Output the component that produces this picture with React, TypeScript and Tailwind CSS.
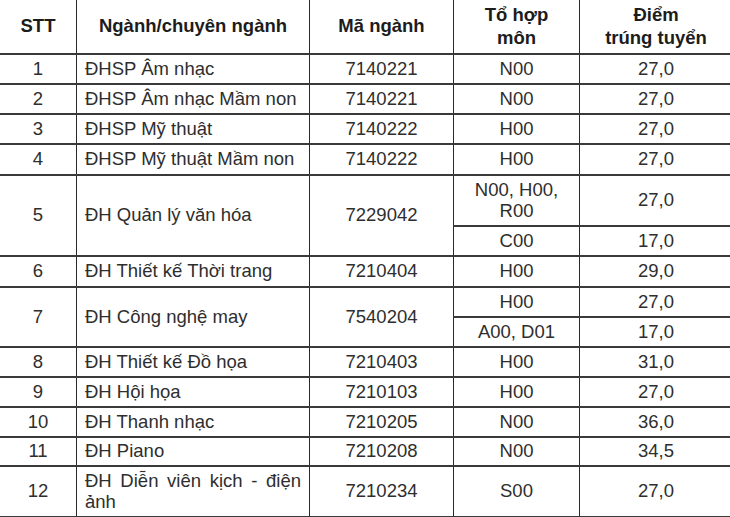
type Sub = { combo: string; score: string; h: string };
type Row = { stt: string; name: string; code: string; subs: Sub[]; justify?: boolean };

const rows: Row[] = [
  { stt: "1", name: "ĐHSP Âm nhạc", code: "7140221", subs: [{ combo: "N00", score: "27,0", h: "h-[30px]" }] },
  { stt: "2", name: "ĐHSP Âm nhạc Mầm non", code: "7140221", subs: [{ combo: "N00", score: "27,0", h: "h-[30px]" }] },
  { stt: "3", name: "ĐHSP Mỹ thuật", code: "7140222", subs: [{ combo: "H00", score: "27,0", h: "h-[30px]" }] },
  { stt: "4", name: "ĐHSP Mỹ thuật Mầm non", code: "7140222", subs: [{ combo: "H00", score: "27,0", h: "h-[31px]" }] },
  {
    stt: "5",
    name: "ĐH Quản lý văn hóa",
    code: "7229042",
    subs: [
      { combo: "N00, H00, R00", score: "27,0", h: "h-[51px]" },
      { combo: "C00", score: "17,0", h: "h-[30px]" },
    ],
  },
  { stt: "6", name: "ĐH Thiết kế Thời trang", code: "7210404", subs: [{ combo: "H00", score: "29,0", h: "h-[31px]" }] },
  {
    stt: "7",
    name: "ĐH Công nghệ may",
    code: "7540204",
    subs: [
      { combo: "H00", score: "27,0", h: "h-[30px]" },
      { combo: "A00, D01", score: "17,0", h: "h-[30px]" },
    ],
  },
  { stt: "8", name: "ĐH Thiết kế Đồ họa", code: "7210403", subs: [{ combo: "H00", score: "31,0", h: "h-[30px]" }] },
  { stt: "9", name: "ĐH Hội họa", code: "7210103", subs: [{ combo: "H00", score: "27,0", h: "h-[30px]" }] },
  { stt: "10", name: "ĐH Thanh nhạc", code: "7210205", subs: [{ combo: "N00", score: "36,0", h: "h-[30px]" }] },
  { stt: "11", name: "ĐH Piano", code: "7210208", subs: [{ combo: "N00", score: "34,5", h: "h-[29px]" }] },
  {
    stt: "12",
    name: "ĐH Diễn viên kịch - điện ảnh",
    code: "7210234",
    subs: [{ combo: "S00", score: "27,0", h: "h-[51px]" }],
    justify: true,
  },
];

const cell = "border-x border-x-[#2a2a2a] border-y-2 border-y-[#3a3a3a] px-2 py-0 align-middle";

export default function App() {
  return (
    <div className="w-[730px] h-[517px] overflow-hidden bg-white">
      <table
        className="table-fixed border-collapse -ml-px -mt-[2px] w-[733px] text-[18.5px] leading-[1.12] text-[#2e2e2e]"
        style={{ fontFamily: '"Liberation Sans", Arial, sans-serif' }}
      >
        <colgroup>
          <col className="w-[77px]" />
          <col className="w-[233px]" />
          <col className="w-[144px]" />
          <col className="w-[126px]" />
          <col className="w-[153px]" />
        </colgroup>
        <thead>
          <tr className="h-[55px] font-bold text-[#1c1c1c] leading-[1.22]">
            <th className={`${cell} text-center font-bold`}>STT</th>
            <th className={`${cell} text-center font-bold`}>Ngành/chuyên ngành</th>
            <th className={`${cell} text-center font-bold`}>Mã ngành</th>
            <th className={`${cell} text-center font-bold`}>
              Tổ hợp
              <br />
              môn
            </th>
            <th className={`${cell} text-center font-bold`}>
              Điểm
              <br />
              trúng tuyển
            </th>
          </tr>
        </thead>
        <tbody>
          {rows.map((r) =>
            r.subs.map((s, i) => (
              <tr key={`${r.stt}-${i}`} className={s.h}>
                {i === 0 && (
                  <>
                    <td rowSpan={r.subs.length} className={`${cell} text-center`}>
                      {r.stt}
                    </td>
                    <td
                      rowSpan={r.subs.length}
                      className={`${cell} ${r.justify ? "text-justify" : "text-left"}`}
                    >
                      {r.name}
                    </td>
                    <td rowSpan={r.subs.length} className={`${cell} text-center`}>
                      {r.code}
                    </td>
                  </>
                )}
                <td className={`${cell} text-center`}>{s.combo}</td>
                <td className={`${cell} text-center`}>{s.score}</td>
              </tr>
            ))
          )}
        </tbody>
      </table>
    </div>
  );
}
